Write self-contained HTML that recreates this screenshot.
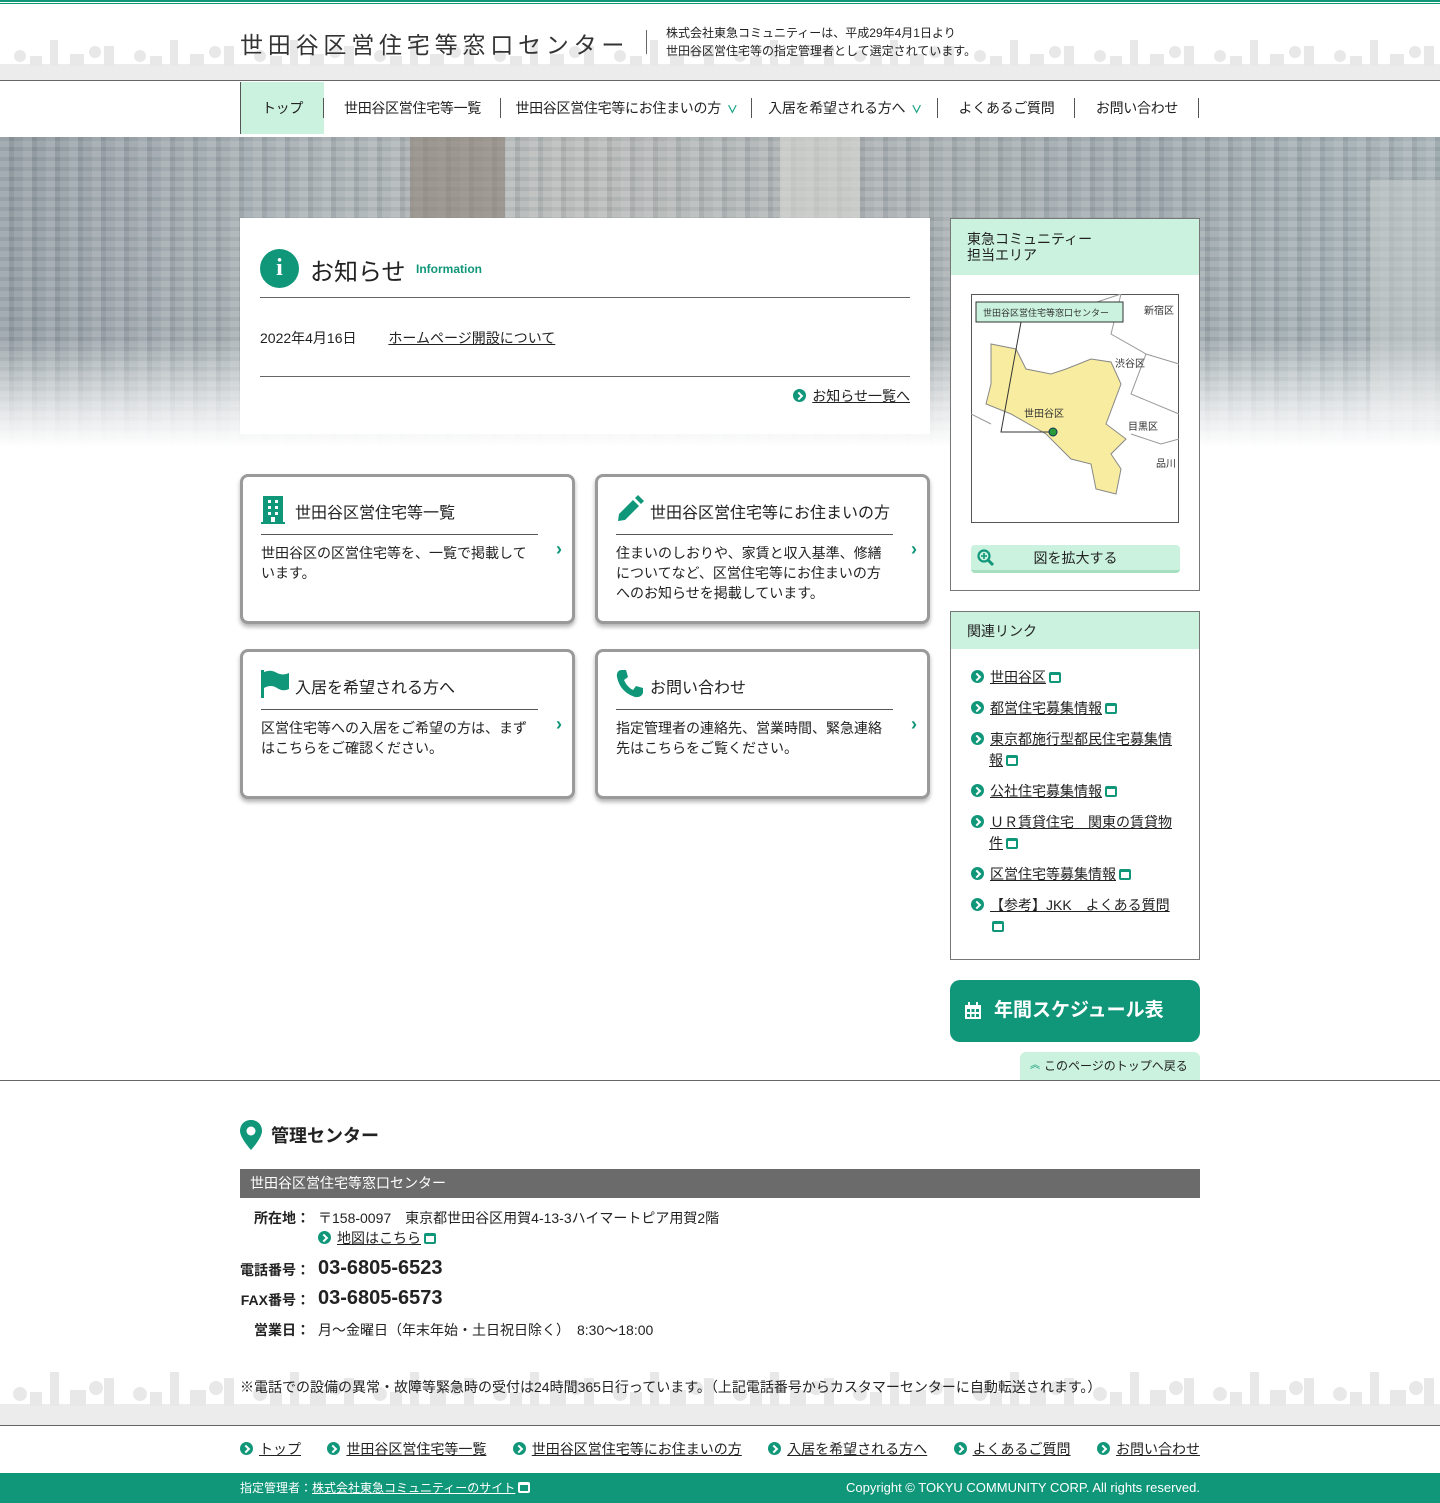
<!DOCTYPE html>
<html lang="ja"><head><meta charset="utf-8">
<style>
*{margin:0;padding:0;box-sizing:border-box}
body{width:1440px;height:1503px;position:relative;background:#fff;font-family:"Liberation Sans","Noto Sans CJK JP",sans-serif;color:#222;overflow:hidden}
.abs{position:absolute}
a{color:#222;text-decoration:underline}
.ar{display:inline-block;width:13px;height:13px;border-radius:50%;background:#10977a;position:relative;vertical-align:-1px;margin-right:6px}
.ar:after{content:"";position:absolute;left:3px;top:4px;width:4px;height:4px;border-top:2px solid #fff;border-right:2px solid #fff;transform:rotate(45deg)}
.ext{display:inline-block;width:12px;height:11px;border:2px solid #10977a;border-top-width:3px;border-radius:2px;margin-left:3px;vertical-align:-1px;position:relative}
.nav{position:absolute;top:82px;left:240px;height:52px;display:flex;font-size:14px;letter-spacing:-0.3px}
.nav div{height:52px;line-height:52px;position:relative;text-align:center;white-space:nowrap}
.nav div:after{content:"";position:absolute;right:0;top:16px;height:20px;border-right:1px solid #555}
.chev{color:#10a080;font-size:11px;margin-left:6px;font-weight:bold}
.card{position:absolute;width:335px;height:150px;border:3px solid #9a9a9a;border-radius:8px;background:#fff;box-shadow:0 3px 4px rgba(0,0,0,.3)}
.card h3{position:absolute;left:18px;top:20px;right:34px;height:38px;border-bottom:1px solid #555;font-weight:normal;font-size:16px;display:flex;align-items:center;padding-left:34px;padding-bottom:10px}
.card p{position:absolute;left:18px;top:66px;right:40px;font-size:14px;line-height:20px}
.card .gt{position:absolute;right:10px;top:62px;color:#10977a;font-size:18px;font-weight:bold}
.side{position:absolute;left:950px;width:250px;border:1px solid #777;background:#fff}
.side .hd{background:#cbf2de;padding:10px 16px;font-size:14px;line-height:16px}
.links{list-style:none;padding:18px 16px 8px 20px;font-size:14px}
.links li{margin-bottom:10px;line-height:21px;padding-left:18px;text-indent:-18px}
</style></head><body>
<div class="abs" style="left:0;top:0;width:1440px;height:2px;background:#10977a"></div>
<div class="abs" style="left:0;top:3px;width:1440px;height:1px;background:#10977a"></div>
<svg class="abs" style="left:0;top:30px" width="1440" height="50">
<defs><pattern id="city" width="120" height="50" patternUnits="userSpaceOnUse">
<rect x="0" y="34" width="120" height="16" fill="#ececec"/>
<rect x="50" y="10" width="8" height="26" fill="#e8e8e8"/><circle cx="20" cy="26" r="6" fill="#e8e8e8"/>
<rect x="70" y="24" width="14" height="12" fill="#e8e8e8"/><circle cx="95" cy="22" r="6" fill="#e8e8e8"/>
<rect x="104" y="16" width="10" height="20" fill="#e8e8e8"/><rect x="30" y="26" width="12" height="10" fill="#e8e8e8"/>
</pattern></defs>
<rect width="1440" height="50" fill="url(#city)"/></svg>
<div class="abs" style="left:0;top:80px;width:1440px;height:1px;background:#666"></div>
<div class="abs" style="left:240px;top:26px;font-size:23px;letter-spacing:4.8px;color:#333">世田谷区営住宅等窓口センター</div>
<div class="abs" style="left:646px;top:30px;height:24px;border-left:1px solid #666"></div>
<div class="abs" style="left:666px;top:24px;font-size:12px;line-height:18px;color:#222">株式会社東急コミュニティーは、平成29年4月1日より<br>世田谷区営住宅等の指定管理者として選定されています。</div>
<div class="nav">
<div style="background:#cbf2de;width:84px;border-left:1px solid #555">トップ</div>
<div style="width:177px">世田谷区営住宅等一覧</div>
<div style="width:251px">世田谷区営住宅等にお住まいの方<span class="chev">∨</span></div>
<div style="width:186px">入居を希望される方へ<span class="chev">∨</span></div>
<div style="width:137px">よくあるご質問</div>
<div style="width:124px">お問い合わせ</div>
</div>
<div class="abs" style="left:0;top:137px;width:1440px;height:310px;background:linear-gradient(90deg,#8f9aa0 0%,#a4adb1 20%,#b5b8b6 40%,#a8aeb0 60%,#9aa5aa 80%,#a4b0b4 100%)"></div>
<div class="abs" style="left:0;top:137px;width:1440px;height:310px;background:repeating-linear-gradient(90deg,rgba(255,255,255,.12) 0 9px,rgba(60,70,80,.08) 9px 14px,rgba(255,255,255,.04) 14px 23px),repeating-linear-gradient(0deg,rgba(255,255,255,.08) 0 6px,rgba(60,70,80,.06) 6px 10px)"></div>
<div class="abs" style="left:410px;top:137px;width:95px;height:90px;background:#8c8074;opacity:.6"></div>
<div class="abs" style="left:780px;top:137px;width:80px;height:90px;background:#d8d8d4;opacity:.6"></div>
<div class="abs" style="left:1370px;top:180px;width:70px;height:240px;background:#c9cecd;opacity:.5"></div>
<div class="abs" style="left:0;top:137px;width:1440px;height:310px;background:linear-gradient(180deg,rgba(255,255,255,0) 0%,rgba(255,255,255,0) 65%,rgba(255,255,255,.7) 88%,#fff 100%)"></div>
<div class="abs" style="left:240px;top:218px;width:690px;height:216px;background:#fff"></div>
<div class="abs" style="left:260px;top:249px;width:39px;height:39px;border-radius:50%;background:#10977a;color:#fff;text-align:center;font:bold 24px/39px 'Liberation Serif',serif">i</div>
<div class="abs" style="left:310px;top:252px;font-size:24px">お知らせ</div>
<div class="abs" style="left:416px;top:262px;font-size:12px;color:#10977a;font-weight:bold">Information</div>
<div class="abs" style="left:260px;top:297px;width:650px;height:1px;background:#666"></div>
<div class="abs" style="left:260px;top:328px;font-size:14px">2022年4月16日 <a style="margin-left:28px">ホームページ開設について</a></div>
<div class="abs" style="left:260px;top:376px;width:650px;height:1px;background:#666"></div>
<div class="abs" style="right:530px;top:386px;font-size:14px"><span class="ar"></span><a>お知らせ一覧へ</a></div>
<div class="card" style="left:240px;top:474px"><h3><svg class="abs" style="left:0;top:-1px" width="24" height="28"><rect x="2" y="0" width="20" height="26" fill="#10977a"/><rect x="0" y="26" width="24" height="2" fill="#10977a"/><g fill="#fff"><rect x="7" y="4" width="3" height="3"/><rect x="14" y="4" width="3" height="3"/><rect x="7" y="10" width="3" height="3"/><rect x="14" y="10" width="3" height="3"/><rect x="7" y="16" width="3" height="3"/><rect x="14" y="16" width="3" height="3"/><rect x="10" y="21" width="4" height="5"/></g></svg>世田谷区営住宅等一覧</h3><p>世田谷区の区営住宅等を、一覧で掲載しています。</p><span class="gt">›</span></div>
<div class="card" style="left:595px;top:474px"><h3><svg class="abs" style="left:0;top:-2px" width="28" height="28"><path d="M3 19 L17 5 L23 11 L9 25 L2 26 Z M19 3 L22 0 L28 6 L25 9 Z" fill="#10977a"/></svg>世田谷区営住宅等にお住まいの方</h3><p>住まいのしおりや、家賃と収入基準、修繕についてなど、区営住宅等にお住まいの方へのお知らせを掲載しています。</p><span class="gt">›</span></div>
<div class="card" style="left:240px;top:649px"><h3><svg class="abs" style="left:0;top:-2px" width="30" height="28"><rect x="0" y="0" width="3" height="28" fill="#10977a"/><path d="M3 2 Q10 -1 16 3 Q22 6 28 3 L28 19 Q22 22 16 18 Q10 14 3 18 Z" fill="#10977a"/></svg>入居を希望される方へ</h3><p>区営住宅等への入居をご希望の方は、まずはこちらをご確認ください。</p><span class="gt">›</span></div>
<div class="card" style="left:595px;top:649px"><h3><svg class="abs" style="left:0;top:-3px" width="28" height="30"><path d="M5 1 L10 1 L12 8 L8 11 Q11 18 17 21 L20 17 L27 19 L27 24 Q25 29 19 28 Q4 23 1 8 Q0 2 5 1 Z" fill="#10977a"/></svg>お問い合わせ</h3><p>指定管理者の連絡先、営業時間、緊急連絡先はこちらをご覧ください。</p><span class="gt">›</span></div>
<div class="side" style="top:218px;height:373px">
<div class="hd" style="height:56px;padding-top:12px">東急コミュニティー<br>担当エリア</div>
<svg class="abs" style="left:20px;top:75px" width="209" height="230">
<rect x="0.5" y="0.5" width="207" height="228" fill="#fff" stroke="#555"/>
<path d="M20 50 L45 55 L55 75 L80 80 L95 75 L120 65 L140 68 L150 90 L135 130 L155 145 L140 160 L150 175 L145 200 L125 195 L120 170 L100 165 L75 140 L40 120 L15 110 L20 90 Z" fill="#f7ec9f" stroke="#888"/>
<path d="M150 0 L140 40 L175 60 L208 70 M175 60 L160 100 L208 120 M160 140 L190 150 L208 145 M0 120 L20 130 M120 10 L150 0" fill="none" stroke="#999"/>
<rect x="5" y="8" width="147" height="20" fill="#cbf2de" stroke="#333"/>
<text x="12" y="22" font-size="9" fill="#333" font-family="Noto Sans CJK JP">世田谷区営住宅等窓口センター</text>
<text x="173" y="20" font-size="10" fill="#333" font-family="Noto Sans CJK JP">新宿区</text>
<text x="144" y="73" font-size="10" fill="#333" font-family="Noto Sans CJK JP">渋谷区</text>
<text x="53" y="123" font-size="10" fill="#333" font-family="Noto Sans CJK JP">世田谷区</text>
<text x="157" y="136" font-size="10" fill="#333" font-family="Noto Sans CJK JP">目黒区</text>
<text x="185" y="173" font-size="10" fill="#333" font-family="Noto Sans CJK JP">品川</text>
<path d="M50 28 L30 138 L82 138" fill="none" stroke="#333"/><circle cx="82" cy="138" r="4" fill="#2a9a3a" stroke="#135"/>
</svg>
<div class="abs" style="left:20px;top:326px;width:209px;height:28px;background:#cbf2de;border-radius:4px;border-bottom:3px solid #a5dfc0;text-align:center;font-size:14px;line-height:26px">図を拡大する</div>
<svg class="abs" style="left:26px;top:330px" width="18" height="18"><circle cx="7" cy="7" r="5.5" fill="none" stroke="#10977a" stroke-width="2.2"/><path d="M11 11 L16 16" stroke="#10977a" stroke-width="3"/><path d="M4 7h6M7 4v6" stroke="#10977a" stroke-width="1.6"/></svg>
</div>
<div class="side" style="top:611px;height:349px">
<div class="hd" style="height:37px;padding-top:11px">関連リンク</div>
<ul class="links">
<li><span class="ar"></span><a>世田谷区</a><span class="ext"></span></li>
<li><span class="ar"></span><a>都営住宅募集情報</a><span class="ext"></span></li>
<li><span class="ar"></span><a>東京都施行型都民住宅募集情報</a><span class="ext"></span></li>
<li><span class="ar"></span><a>公社住宅募集情報</a><span class="ext"></span></li>
<li><span class="ar"></span><a>ＵＲ賃貸住宅　関東の賃貸物件</a><span class="ext"></span></li>
<li><span class="ar"></span><a>区営住宅等募集情報</a><span class="ext"></span></li>
<li><span class="ar"></span><a>【参考】JKK　よくある質問</a> <span class="ext"></span></li>
</ul>
</div>
<div class="abs" style="left:950px;top:980px;width:250px;height:62px;background:#10977a;border-radius:10px;color:#fff;font-size:19px;font-weight:bold;line-height:62px;padding-left:44px">年間スケジュール表</div>
<svg class="abs" style="left:964px;top:1002px" width="18" height="18"><rect x="1" y="3" width="16" height="14" fill="#fff"/><g fill="#10977a"><rect x="3" y="7" width="3" height="3"/><rect x="7.5" y="7" width="3" height="3"/><rect x="12" y="7" width="3" height="3"/><rect x="3" y="12" width="3" height="3"/><rect x="7.5" y="12" width="3" height="3"/><rect x="12" y="12" width="3" height="3"/></g><rect x="4" y="0" width="2" height="4" fill="#fff"/><rect x="12" y="0" width="2" height="4" fill="#fff"/></svg>
<div class="abs" style="left:1020px;top:1052px;width:180px;height:28px;background:#cbf2de;border-radius:6px 6px 0 0;font-size:12px;line-height:28px;padding-left:24px"><span style="color:#10977a;position:absolute;left:10px;top:0;font-size:10px">︽</span>このページのトップへ戻る</div>
<div class="abs" style="left:0;top:1080px;width:1440px;height:1px;background:#666"></div>
<svg class="abs" style="left:240px;top:1120px" width="22" height="30"><path d="M11 0 C4 0 0 5 0 11 C0 18 11 30 11 30 C11 30 22 18 22 11 C22 5 18 0 11 0 Z" fill="#10977a"/><circle cx="11" cy="11" r="4.5" fill="#fff"/></svg>
<div class="abs" style="left:271px;top:1122px;font-size:18px;font-weight:bold">管理センター</div>
<div class="abs" style="left:240px;top:1169px;width:960px;height:29px;background:#6b6b6b;color:#fff;font-size:14px;line-height:29px;padding-left:10px">世田谷区営住宅等窓口センター</div>
<div class="abs" style="left:240px;top:1208px;width:70px;text-align:right;font-size:14px;font-weight:bold;line-height:20px">所在地：</div>
<div class="abs" style="left:318px;top:1208px;font-size:14px;line-height:20px">〒158-0097　東京都世田谷区用賀4-13-3ハイマートピア用賀2階<br><span class="ar"></span><a>地図はこちら</a><span class="ext"></span></div>
<div class="abs" style="left:240px;top:1259px;width:70px;text-align:right;font-size:14px;font-weight:bold;line-height:22px">電話番号：</div>
<div class="abs" style="left:318px;top:1257px;font-size:20px;font-weight:bold">03-6805-6523</div>
<div class="abs" style="left:240px;top:1289px;width:70px;text-align:right;font-size:14px;font-weight:bold;line-height:22px">FAX番号：</div>
<div class="abs" style="left:318px;top:1287px;font-size:20px;font-weight:bold">03-6805-6573</div>
<div class="abs" style="left:240px;top:1320px;width:70px;text-align:right;font-size:14px;font-weight:bold;line-height:20px">営業日：</div>
<div class="abs" style="left:318px;top:1320px;font-size:14px;line-height:20px">月～金曜日（年末年始・土日祝日除く）　8:30～18:00</div>
<svg class="abs" style="left:0;top:1360px" width="1440" height="65">
<defs><pattern id="city2" width="120" height="65" patternUnits="userSpaceOnUse">
<rect x="0" y="44" width="120" height="21" fill="#ececec"/>
<rect x="50" y="12" width="9" height="34" fill="#e8e8e8"/><circle cx="20" cy="34" r="7" fill="#e8e8e8"/>
<rect x="70" y="30" width="16" height="16" fill="#e8e8e8"/><circle cx="96" cy="28" r="7" fill="#e8e8e8"/>
<rect x="104" y="18" width="10" height="28" fill="#e8e8e8"/><rect x="30" y="32" width="12" height="14" fill="#e8e8e8"/>
</pattern></defs>
<rect width="1440" height="65" fill="url(#city2)"/></svg>
<div class="abs" style="left:240px;top:1377px;font-size:14px;line-height:20px">※電話での設備の異常・故障等緊急時の受付は24時間365日行っています。（上記電話番号からカスタマーセンターに自動転送されます。）</div>
<div class="abs" style="left:0;top:1425px;width:1440px;height:1px;background:#666"></div>
<div class="abs" style="left:240px;top:1439px;width:960px;display:flex;justify-content:space-between;font-size:14px;line-height:20px">
<span><span class="ar"></span><a>トップ</a></span><span><span class="ar"></span><a>世田谷区営住宅等一覧</a></span><span><span class="ar"></span><a>世田谷区営住宅等にお住まいの方</a></span><span><span class="ar"></span><a>入居を希望される方へ</a></span><span><span class="ar"></span><a>よくあるご質問</a></span><span><span class="ar"></span><a>お問い合わせ</a></span>
</div>
<div class="abs" style="left:0;top:1473px;width:1440px;height:30px;background:#10977a;color:#fff;font-size:12px;line-height:30px">
<span class="abs" style="left:240px">指定管理者：<a style="color:#fff">株式会社東急コミュニティーのサイト</a><span class="ext" style="border-color:#fff"></span></span>
<span class="abs" style="right:240px;font-size:13px">Copyright © TOKYU COMMUNITY CORP. All rights reserved.</span>
</div>
</body></html>
